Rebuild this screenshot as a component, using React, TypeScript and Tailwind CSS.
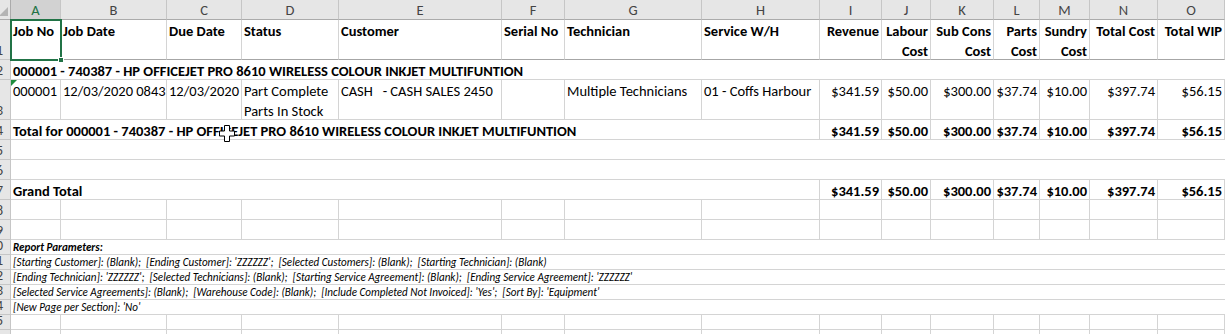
import React from "react";

const colW = [
  "w-[50px]",
  "w-[106px]",
  "w-[75px]",
  "w-[97px]",
  "w-[163px]",
  "w-[63px]",
  "w-[137px]",
  "w-[118px]",
  "w-[62px]",
  "w-[49px]",
  "w-[63px]",
  "w-[46px]",
  "w-[50px]",
  "w-[68px]",
  "w-[67px]",
];

const letters = ["A", "B", "C", "D", "E", "F", "G", "H", "I", "J", "K", "L", "M", "N", "O"];

type Cell = { text?: string; right?: boolean; bold?: boolean; wrap?: boolean };

const font = { fontFamily: "Calibri, Carlito, Lato, 'Noto Sans', sans-serif" };

const RowHead = ({ n, h }: { n: number; h: string }) => (
  <div className={`relative w-[11px] shrink-0 overflow-hidden border-r border-b border-[#c6c6c6] bg-[#e6e6e6] ${h}`}>
    <span className="absolute bottom-0 right-[7px] text-[14px] leading-[17px] text-[#444]">{n}</span>
  </div>
);

const GridRow = ({
  n,
  h,
  cells,
  bottom = "border-[#d4d4d4]",
}: {
  n: number;
  h: string;
  cells: Cell[];
  bottom?: string;
}) => (
  <div className="flex">
    <RowHead n={n} h={h} />
    {cells.map((c, i) => (
      <div
        key={i}
        className={`${colW[i]} ${h} shrink-0 overflow-hidden border-r border-b border-r-[#d4d4d4] ${bottom} px-[2px] pt-[1px] text-[14.5px] leading-[20px] ${
          c.right ? "text-right" : "text-left"
        } ${c.bold ? "font-bold" : ""} ${c.wrap ? "whitespace-pre-wrap" : "whitespace-pre"}`}
      >
        {c.text}
      </div>
    ))}
  </div>
);

const MergedRow = ({
  n,
  h,
  text,
  className = "",
  nums,
}: {
  n: number;
  h: string;
  text?: string;
  className?: string;
  nums?: string[];
}) => (
  <div className="flex">
    <RowHead n={n} h={h} />
    <div
      className={`${h} min-w-0 flex-1 whitespace-pre border-b border-[#d4d4d4] px-[2px] ${className} ${
        nums ? "border-r border-r-[#d4d4d4]" : ""
      }`}
    >
      {text}
    </div>
    {nums?.map((t, i) => (
      <div
        key={i}
        className={`${colW[i + 8]} ${h} shrink-0 border-r border-b border-[#d4d4d4] px-[2px] pt-[1px] text-right text-[14.5px] font-bold leading-[20px]`}
      >
        {t}
      </div>
    ))}
  </div>
);

const empty: Cell[] = letters.map(() => ({}));
const totals = ["$341.59", "$50.00", "$300.00", "$37.74", "$10.00", "$397.74", "$56.15"];

const header: Cell[] = [
  { text: "Job No", bold: true },
  { text: "Job Date", bold: true },
  { text: "Due Date", bold: true },
  { text: "Status", bold: true },
  { text: "Customer", bold: true },
  { text: "Serial No", bold: true },
  { text: "Technician", bold: true },
  { text: "Service W/H", bold: true },
  { text: "Revenue", bold: true, right: true },
  { text: "Labour Cost", bold: true, right: true, wrap: true },
  { text: "Sub Cons Cost", bold: true, right: true, wrap: true },
  { text: "Parts Cost", bold: true, right: true, wrap: true },
  { text: "Sundry Cost", bold: true, right: true, wrap: true },
  { text: "Total Cost", bold: true, right: true },
  { text: "Total WIP", bold: true, right: true },
];

const detail: Cell[] = [
  { text: "000001" },
  { text: "12/03/2020 0843" },
  { text: "12/03/2020" },
  { text: "Part Complete Parts In Stock", wrap: true },
  { text: "CASH   - CASH SALES 2450" },
  { text: "" },
  { text: "Multiple Technicians" },
  { text: "01 - Coffs Harbour" },
  ...totals.map((t) => ({ text: t, right: true })),
];

const params = [
  "[Starting Customer]: (Blank);  [Ending Customer]: 'ZZZZZZ';  [Selected Customers]: (Blank);  [Starting Technician]: (Blank)",
  "[Ending Technician]: 'ZZZZZZ';  [Selected Technicians]: (Blank);  [Starting Service Agreement]: (Blank);  [Ending Service Agreement]: 'ZZZZZZ'",
  "[Selected Service Agreements]: (Blank);  [Warehouse Code]: (Blank);  [Include Completed Not Invoiced]: 'Yes';  [Sort By]: 'Equipment'",
  "[New Page per Section]: 'No'",
];

export default function App() {
  return (
    <div className="relative h-[334px] w-[1225px] overflow-hidden bg-white text-black" style={font}>
      {/* column letters */}
      <div className="flex h-[20px]">
        <div className="relative w-[11px] shrink-0 border-r border-b border-[#ababab] bg-[#e6e6e6]">
          <div className="absolute bottom-[3px] right-[2px] h-0 w-0 border-b-[9px] border-l-[9px] border-b-[#b4b4b4] border-l-transparent" />
        </div>
        {letters.map((l, i) => (
          <div
            key={l}
            className={`${colW[i]} shrink-0 border-r border-b text-center text-[14.5px] leading-[20px] ${
              i === 0
                ? "border-r-[#c6c6c6] border-b-[#217346] bg-[#d2d2d2] text-[#217346]"
                : "border-r-[#c6c6c6] border-b-[#ababab] bg-[#e6e6e6] text-[#444]"
            }`}
          >
            {l}
          </div>
        ))}
      </div>

      <GridRow n={1} h="h-[40px]" cells={header} bottom="border-b-[#a6a6a6]" />
      <MergedRow
        n={2}
        h="h-[20px]"
        className="pt-[1px] text-[14.5px] font-bold leading-[20px]"
        text="000001 - 740387 - HP OFFICEJET PRO 8610 WIRELESS COLOUR INKJET MULTIFUNTION"
      />
      <GridRow n={3} h="h-[40px]" cells={detail} />
      <MergedRow
        n={4}
        h="h-[20px]"
        className="pt-[1px] text-[14.5px] font-bold leading-[20px]"
        text="Total for 000001 - 740387 - HP OFFICEJET PRO 8610 WIRELESS COLOUR INKJET MULTIFUNTION"
        nums={totals}
      />
      <MergedRow n={5} h="h-[20px]" />
      <MergedRow n={6} h="h-[20px]" />
      <MergedRow
        n={7}
        h="h-[20px]"
        className="pt-[1px] text-[14.5px] font-bold leading-[20px]"
        text="Grand Total"
        nums={totals}
      />
      <GridRow n={8} h="h-[20px]" cells={empty} />
      <GridRow n={9} h="h-[20px]" cells={empty} />
      <MergedRow
        n={10}
        h="h-[15px]"
        className="text-[11.1px] font-bold italic leading-[15px]"
        text="Report Parameters:"
      />
      {params.map((p, i) => (
        <MergedRow key={i} n={11 + i} h="h-[15px]" className="text-[11.1px] italic leading-[15px]" text={p} />
      ))}
      <GridRow n={15} h="h-[15px]" cells={empty} />
      <GridRow n={16} h="h-[20px]" cells={empty} />

      {/* selected cell A1 */}
      <div className="pointer-events-none absolute left-[10px] top-[19px] h-[42px] w-[52px] border-2 border-[#217346]">
        <div className="absolute -bottom-[4px] -right-[4px] h-[6px] w-[6px] border border-white bg-[#217346]" />
      </div>

      {/* error indicator A3 */}
      <div className="absolute left-[11px] top-[80px] h-0 w-0 border-t-[6px] border-r-[6px] border-t-[#1e8c3c] border-r-transparent" />

      {/* cursor */}
      <svg className="absolute left-[219px] top-[125px]" width="16" height="17" viewBox="0 0 16 17">
        <path
          d="M5.5 0.5 H10.5 V6 H15.5 V11 H10.5 V16.5 H5.5 V11 H0.5 V6 H5.5 Z"
          fill="white"
          stroke="black"
          strokeWidth="1"
        />
      </svg>
    </div>
  );
}
